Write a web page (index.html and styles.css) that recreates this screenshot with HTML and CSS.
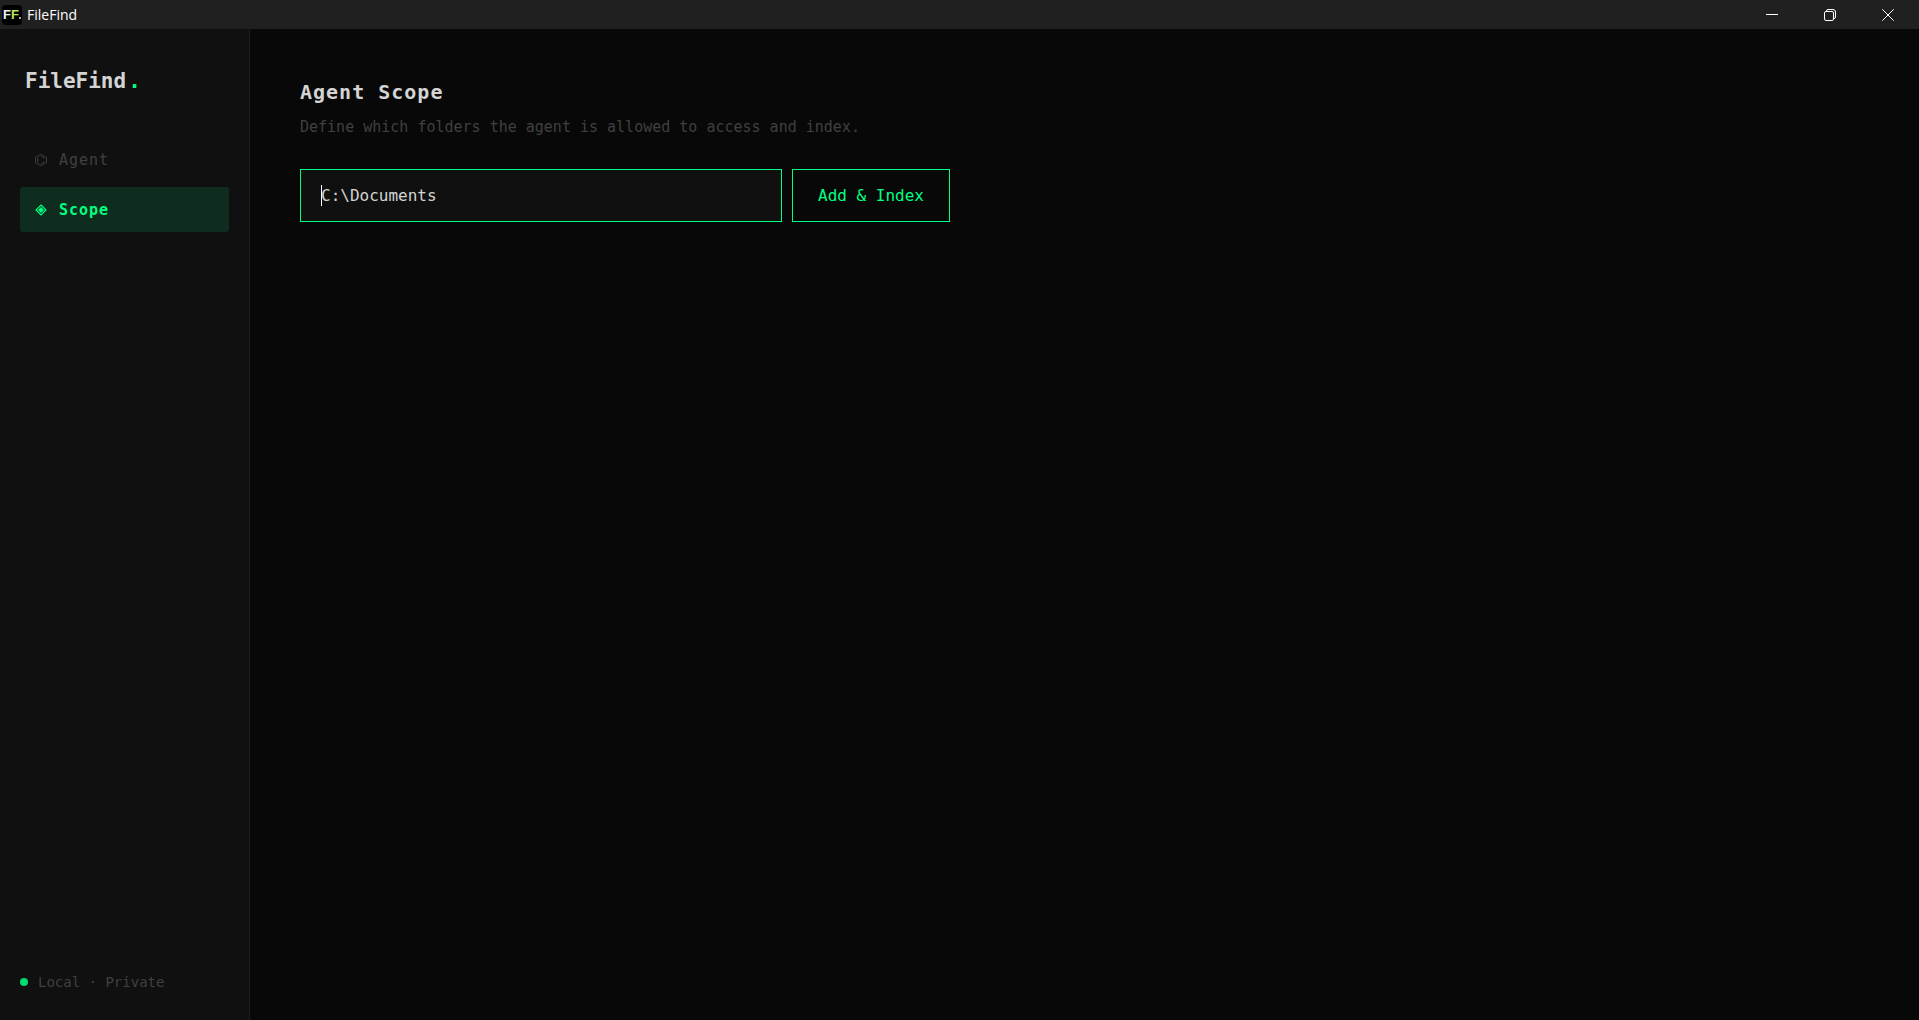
FILE: index.html
```html
<!DOCTYPE html>
<html lang="en">
<head>
<meta charset="utf-8">
<title>FileFind</title>
<link rel="stylesheet" href="styles.css">
</head>
<body>
<header class="titlebar">
  <span class="app-icon" aria-hidden="true">F<span class="app-icon-accent">F</span><span class="app-icon-dot"></span></span>
  <span class="window-title">FileFind</span>
  <div class="window-controls">
    <button class="window-button" type="button" aria-label="Minimize"><svg viewBox="0 0 12 12"><path d="M0 5.5h12"/></svg></button>
    <button class="window-button" type="button" aria-label="Restore"><svg viewBox="0 0 12 12"><rect x=".5" y="2.5" width="9" height="9" rx="1.5"/><path d="M2.5 2.5V2q0-1.500 1.500-1.500h5Q11.500.5 11.500 3v5q0 1.500-1.500 1.500h-.5"/></svg></button>
    <button class="window-button" type="button" aria-label="Close"><svg viewBox="0 0 12 12"><path d="M.3.3l11.400 11.400M11.700.3L.3 11.700"/></svg></button>
  </div>
</header>
<div class="app">
  <aside class="sidebar">
    <div class="logo">FileFind<span class="logo-dot">.</span></div>
    <nav class="nav">
      <a class="nav-item" href="#agent">
        <svg class="nav-icon" viewBox="0 0 12 12" aria-hidden="true"><path d="M6 .5l5.500 2.800v5.400L6 11.500.5 8.700V3.300zM2.700 3.800v4.400M6.200 2.500l3.300 1.700M6.200 9.500l3.300-1.700" fill="none" stroke="currentColor"/></svg>
        Agent
      </a>
      <a class="nav-item active" href="#scope" aria-current="page">
        <svg class="nav-icon" viewBox="0 0 12 12" aria-hidden="true"><path d="M6 1L11 6 6 11 1 6z" fill="none" stroke="currentColor" stroke-width="1.200"/><path d="M6 3L9 6 6 9 3 6z" fill="currentColor"/></svg>
        Scope
      </a>
    </nav>
    <div class="status"><span class="status-dot"></span>Local · Private</div>
  </aside>
  <main class="content">
    <h1 class="heading">Agent Scope</h1>
    <p class="description">Define which folders the agent is allowed to access and index.</p>
    <form class="scope-form">
      <div class="field">
        <input class="path-input" type="text" value="C:\Documents" aria-label="Folder path">
        <span class="caret"></span>
      </div>
      <button class="add-button" type="button">Add &amp; Index</button>
    </form>
  </main>
</div>
</body>
</html>
```
FILE: styles.css
```css
* { box-sizing: border-box; }

body {
  margin: 0;
  min-height: 100vh;
  display: flex;
  flex-direction: column;
  background: #080808;
  color: #d4d4d4;
  font-family: "DejaVu Sans Mono", monospace;
}

.titlebar {
  display: flex;
  align-items: center;
  height: 29px;
  padding: 0 2px;
  background: #202020;
}

.app-icon {
  display: flex;
  align-items: baseline;
  justify-content: center;
  width: 20px;
  height: 20px;
  border-radius: 4px;
  background: #000;
  color: #f0f0f0;
  font: 700 13px/20px "Liberation Sans", sans-serif;
}

.app-icon-accent { color: #b5ea5c; }

.app-icon-dot {
  width: 2px;
  height: 2px;
  background: #aaa;
}

.window-title {
  margin-left: 5px;
  color: #fff;
  font: 14px/20px "Open Sans", sans-serif;
}

.window-controls { display: flex; margin-left: auto; }

.window-button {
  display: grid;
  place-items: center;
  width: 58px;
  height: 28px;
  padding: 0;
  border: 0;
  background: none;
}

.window-button svg {
  width: 12px;
  height: 12px;
  fill: none;
  stroke: #fff;
}

.app { display: flex; flex: 1; }

.sidebar {
  display: flex;
  flex-direction: column;
  width: 250px;
  padding: 36px 20px 28px;
  border-right: 1px solid #1e1e1e;
  background: #101010;
}

.logo {
  padding: 0 5px;
  font-size: 21px;
  font-weight: 700;
  line-height: 32px;
}

.logo-dot {
  margin-left: 2px;
  color: #00ff80;
}

.nav {
  display: flex;
  flex-direction: column;
  gap: 5px;
  margin-top: 40px;
}

.nav-item {
  display: flex;
  align-items: center;
  gap: 12px;
  height: 45px;
  padding: 0 15px;
  border-radius: 3px;
  color: #404040;
  font-size: 15px;
  letter-spacing: 1px;
  text-decoration: none;
}

.nav-item.active {
  background: #0f2d1f;
  color: #00ff80;
  font-weight: 700;
}

.nav-icon { width: 12px; height: 12px; }

.status {
  display: flex;
  align-items: center;
  gap: 10px;
  margin-top: auto;
  color: #404040;
  font-size: 14px;
  line-height: 20px;
}

.status-dot {
  width: 8px;
  height: 8px;
  border-radius: 50%;
  background: #00da70;
}

.content { flex: 1; padding: 50px; }

.heading {
  margin: 0;
  font-size: 20px;
  line-height: 26px;
  letter-spacing: 1px;
}

.description {
  margin: 12px 0 32px;
  color: #404040;
  font-size: 15px;
  line-height: 20px;
}

.scope-form {
  display: flex;
  gap: 10px;
  max-width: 650px;
}

.field { position: relative; flex: 1; }

.path-input {
  display: block;
  width: 100%;
  height: 53px;
  padding: 0 20px;
  border: 1px solid #00ff80;
  border-radius: 0;
  outline: none;
  background: #101010;
  color: #d4d4d4;
  font: inherit;
  font-size: 16px;
}

.caret {
  position: absolute;
  top: 16px;
  left: 21px;
  width: 1px;
  height: 21px;
  background: #fff;
}

.add-button {
  padding: 0 25px;
  border: 1px solid #00ff80;
  background: none;
  color: #00ff80;
  font: inherit;
  font-size: 16px;
}
```
